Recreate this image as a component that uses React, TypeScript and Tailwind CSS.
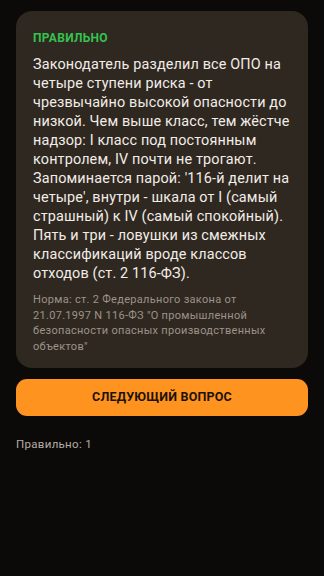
export default function App() {
  return (
    <div
      className="min-h-[576px] w-full bg-[#0c0a08] px-4 pt-[11px]"
      style={{ fontFamily: 'Roboto, "Noto Sans", sans-serif' }}
    >
      <div className="rounded-[16px] bg-[#2f2820] px-[17px] pb-[14px] pt-[19px]">
        <p className="text-[12px] font-bold leading-[16px] tracking-[0.3px] text-[#35c24f]">ПРАВИЛЬНО</p>
        <p className="mt-[9px] text-[14.4px] leading-[19px] tracking-[0.15px] text-[#f2ede8]">
          Законодатель разделил все ОПО на четыре ступени риска - от чрезвычайно высокой опасности до
          низкой. Чем выше класс, тем жёстче надзор: I класс под постоянным контролем, IV почти не
          трогают. Запоминается парой: '116-й делит на четыре', внутри - шкала от I (самый страшный)
          к IV (самый спокойный). Пять и три - ловушки из смежных классификаций вроде классов отходов
          (ст. 2 116-ФЗ).
        </p>
        <p className="mt-[9px] text-[11px] leading-[15.5px] tracking-[0.3px] text-[#9c938a]">
          Норма: ст. 2 Федерального закона от 21.07.1997 N 116-ФЗ "О промышленной безопасности
          опасных производственных объектов"
        </p>
      </div>
      <button className="mt-[11px] flex h-[37px] w-full items-center justify-center rounded-[11px] bg-[#ff931f] text-[12.5px] font-bold tracking-[0.2px] text-[#1a120a]">
        СЛЕДУЮЩИЙ ВОПРОС
      </button>
      <p className="mt-[20px] text-[11.5px] leading-[16px] tracking-[0.3px] text-[#b3aca5]">Правильно: 1</p>
    </div>
  );
}
